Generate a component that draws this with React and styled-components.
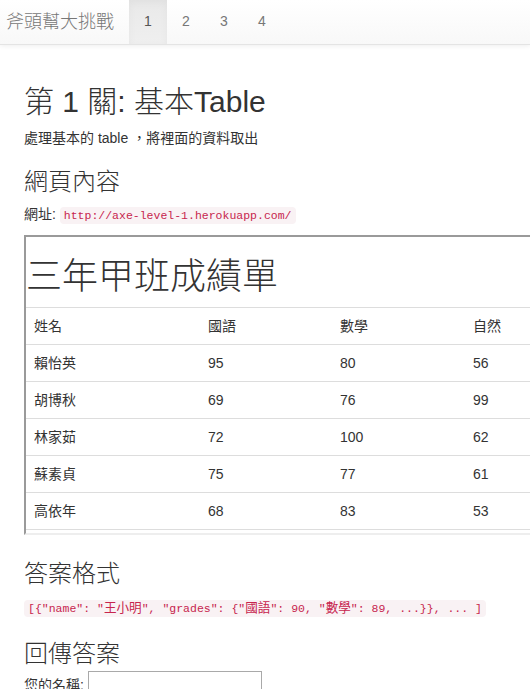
import React from "react";
import styled, { createGlobalStyle } from "styled-components";

const Global = createGlobalStyle`
  html, body { margin: 0; padding: 0; overflow: hidden; background: #fff; }
  body {
    font-family: "Liberation Sans", "Noto Sans CJK TC", sans-serif;
    font-size: 14px;
    line-height: 1.42857;
    color: #333;
  }
  * { box-sizing: border-box; }
`;

const Navbar = styled.nav`
  display: flex;
  align-items: stretch;
  height: 45px;
  background: linear-gradient(to bottom, #ffffff 0%, #f8f8f8 100%);
  border-bottom: 1px solid #e4e4e4;
  box-shadow: 0 1px 5px rgba(0, 0, 0, 0.07);
`;

const Brand = styled.div`
  display: flex;
  align-items: center;
  padding: 0 15px 0 6px;
  font-size: 18px;
  color: #777;
  line-height: 20px;
  font-weight: 300;
`;

const Tab = styled.a`
  display: flex;
  align-items: center;
  justify-content: center;
  width: 38px;
  font-size: 14px;
  color: ${(p) => (p.$active ? "#555" : "#777")};
  text-decoration: none;
  background: ${(p) =>
    p.$active ? "linear-gradient(to bottom, #e9e9e9 0%, #efefef 100%)" : "transparent"};
  box-shadow: ${(p) => (p.$active ? "inset 0 3px 9px rgba(0,0,0,0.04)" : "none")};
`;

const Container = styled.main`
  padding: 20px 0 0 24px;
  overflow: hidden;
`;

const H1 = styled.h1`
  font-size: 30px;
  font-weight: 300;
  line-height: 1.1;
  margin: 20px 0 11px;
`;

const H3 = styled.h3`
  font-size: 24px;
  font-weight: 300;
  line-height: 1.1;
  margin: 20px 0 ${(p) => (p.$mb != null ? p.$mb : 10)}px;
`;

const P = styled.p`
  margin: 0 0 ${(p) => (p.$mb != null ? p.$mb : 10)}px;
`;

const Code = styled.code`
  font-family: "Liberation Mono", "Noto Sans CJK TC", monospace;
  font-size: 11.5px;
  padding: 2px 4px;
  color: #c7254e;
  background: #f9f2f4;
  border-radius: 4px;
`;

const Wide = styled.span`
  font-size: 12.6px;
`;

const Frame = styled.div`
  width: 620px;
  height: 300px;
  margin-bottom: 26px;
  border: 2px solid;
  border-color: #9a9a9a #eeeeee #eeeeee #9a9a9a;
  overflow: hidden;
  background: #fff;
`;

const FrameTitle = styled.h1`
  font-size: 36px;
  font-weight: 300;
  line-height: 1.1;
  margin: 20px 0 10px;
`;

const Table = styled.table`
  border-collapse: collapse;
  table-layout: fixed;
  width: 620px;
`;

const Cell = styled.td`
  width: ${(p) => p.$w}px;
  padding: 8px;
  line-height: 20px;
  border-top: 1px solid #ddd;
  text-align: left;
  vertical-align: top;
  font-weight: normal;
`;

const FormRow = styled.div`
  display: flex;
  align-items: flex-start;
  gap: 4px;
`;

const Label = styled.label`
  line-height: 20px;
  padding-top: 4px;
`;

const Input = styled.input`
  width: 174px;
  height: 22px;
  border: 1px solid #a9a9a9;
  margin: 0;
  padding: 1px 2px;
  font: inherit;
`;

const widths = [174, 132, 133, 181];
const header = ["姓名", "國語", "數學", "自然"];
const rows = [
  ["賴怡英", "95", "80", "56"],
  ["胡博秋", "69", "76", "99"],
  ["林家茹", "72", "100", "62"],
  ["蘇素貞", "75", "77", "61"],
  ["高依年", "68", "83", "53"],
  ["", "", "", ""],
];

export default function App() {
  return (
    <>
      <Global />
      <Navbar>
        <Brand>斧頭幫大挑戰</Brand>
        <Tab $active>1</Tab>
        <Tab>2</Tab>
        <Tab>3</Tab>
        <Tab>4</Tab>
      </Navbar>
      <Container>
        <H1>第 1 關: 基本Table</H1>
        <P>處理基本的 table ，將裡面的資料取出</P>
        <H3>網頁內容</H3>
        <P>
          網址: <Code>http://axe-level-1.herokuapp.com/</Code>
        </P>
        <Frame>
          <FrameTitle>三年甲班成績單</FrameTitle>
          <Table>
            <tbody>
              <tr>
                {header.map((h, i) => (
                  <Cell as="th" key={h} $w={widths[i]}>
                    {h}
                  </Cell>
                ))}
              </tr>
              {rows.map((r, ri) => (
                <tr key={ri}>
                  {r.map((c, i) => (
                    <Cell key={i} $w={widths[i]}>
                      {c || "\u00a0"}
                    </Cell>
                  ))}
                </tr>
              ))}
            </tbody>
          </Table>
        </Frame>
        <H3>答案格式</H3>
        <P $mb={22}>
          <Code>
            {'[{"name": "'}<Wide>王小明</Wide>{'", "grades": {"'}<Wide>國語</Wide>
            {'": 90, "'}<Wide>數學</Wide>{'": 89, ...}}, ... ]'}
          </Code>
        </P>
        <H3 $mb={4}>回傳答案</H3>
        <FormRow>
          <Label>您的名稱:</Label>
          <Input type="text" />
        </FormRow>
      </Container>
    </>
  );
}
